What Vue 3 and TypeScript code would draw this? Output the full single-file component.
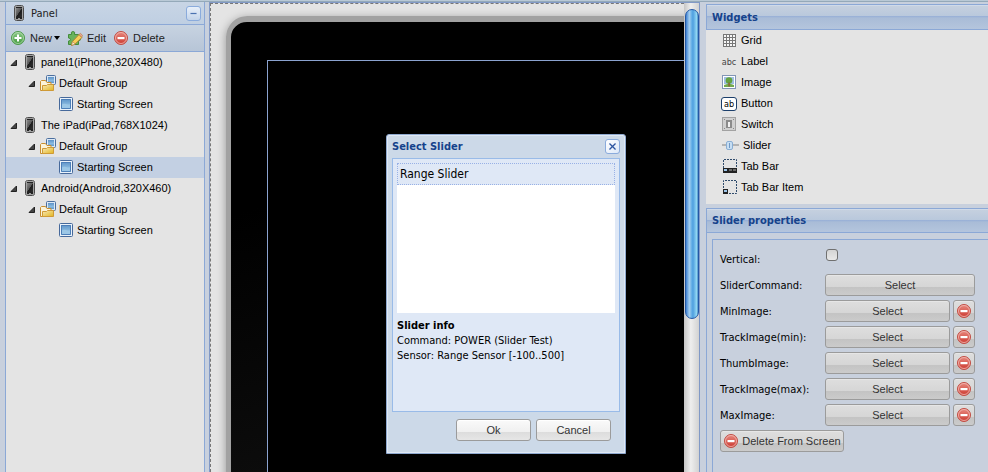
<script setup lang="ts">
import { ref } from 'vue'

interface TreeRow {
  id: number
  label: string
  icon: 'phone' | 'group' | 'screen'
  level: number
}

interface WidgetItem {
  label: string
  icon?: string
  glyph?: string
  wide?: boolean
}

const rows: TreeRow[] = [
  { id: 1, label: 'panel1(iPhone,320X480)', icon: 'phone', level: 0 },
  { id: 2, label: 'Default Group', icon: 'group', level: 1 },
  { id: 3, label: 'Starting Screen', icon: 'screen', level: 2 },
  { id: 4, label: 'The iPad(iPad,768X1024)', icon: 'phone', level: 0 },
  { id: 5, label: 'Default Group', icon: 'group', level: 1 },
  { id: 6, label: 'Starting Screen', icon: 'screen', level: 2 },
  { id: 7, label: 'Android(Android,320X460)', icon: 'phone', level: 0 },
  { id: 8, label: 'Default Group', icon: 'group', level: 1 },
  { id: 9, label: 'Starting Screen', icon: 'screen', level: 2 },
]

const widgets: WidgetItem[] = [
  { label: 'Grid', icon: 'grid' },
  { label: 'Label', glyph: 'abc' },
  { label: 'Image', icon: 'image' },
  { label: 'Button', glyph: 'ab' },
  { label: 'Switch', icon: 'switch' },
  { label: 'Slider', icon: 'slider', wide: true },
  { label: 'Tab Bar', icon: 'tabbar' },
  { label: 'Tab Bar Item', icon: 'tabitem' },
]

const images = ['MinImage', 'TrackImage(min)', 'ThumbImage', 'TrackImage(max)', 'MaxImage']

const selected = ref(6)
const vertical = ref(false)
const dialogOpen = ref(true)
</script>

<template>
  <div class="page">
    <svg class="sprite" aria-hidden="true">
      <defs>
        <linearGradient id="gGreen" x1="0" y1="0" x2="0" y2="1">
          <stop offset="0" stop-color="#8fc98a" /><stop offset="1" stop-color="#3f9a3c" />
        </linearGradient>
        <linearGradient id="gRed" x1="0" y1="0" x2="0" y2="1">
          <stop offset="0" stop-color="#e88a80" /><stop offset="1" stop-color="#cb392f" />
        </linearGradient>
        <linearGradient id="gBlue" x1="0" y1="0" x2="0" y2="1">
          <stop offset="0" stop-color="#5d93c8" /><stop offset="0.6" stop-color="#8bbbe0" /><stop offset="1" stop-color="#5c95c9" />
        </linearGradient>
        <linearGradient id="gFolder" x1="0" y1="0" x2="1" y2="1">
          <stop offset="0" stop-color="#f8e9b8" /><stop offset="1" stop-color="#e2b51f" />
        </linearGradient>
        <linearGradient id="gPhone" x1="0" y1="0" x2="1" y2="1">
          <stop offset="0" stop-color="#888" /><stop offset="0.5" stop-color="#555" /><stop offset="0.52" stop-color="#1c1c1c" /><stop offset="1" stop-color="#2e2e2e" />
        </linearGradient>
      </defs>
      <symbol id="i-phone" viewBox="0 0 16 16">
        <rect x="3.5" y="0.5" width="9" height="15" rx="2" fill="#ddd" stroke="#4b4b4b" />
        <rect x="4.5" y="1.5" width="7" height="13" rx="1" fill="#222" stroke="#bbb" stroke-width="0.6" />
        <rect x="5" y="3" width="6" height="9" fill="url(#gPhone)" />
        <rect x="7" y="13" width="2" height="1" fill="#999" />
      </symbol>
      <symbol id="i-group" viewBox="0 0 16 16">
        <rect x="6.5" y="0.5" width="9" height="9" rx="1" fill="#dce8f5" stroke="#4c6f9e" />
        <rect x="8" y="2" width="6" height="6" fill="url(#gBlue)" />
        <path d="M0.5 15.5v-9l1-1h4l1.500 2h4v8z" fill="#fbf3da" stroke="#c98f2e" />
        <path d="M2.500 15.500v-5h4l1-1h6v6z" fill="url(#gFolder)" stroke="#cf9a36" />
      </symbol>
      <symbol id="i-screen" viewBox="0 0 16 16">
        <rect x="1.500" y="1.500" width="13" height="13" rx="1" fill="#eaf2fa" stroke="#46699b" />
        <rect x="3" y="3" width="10" height="10" fill="url(#gBlue)" />
        <path d="M3 9q3-2 5-1t5 0v5H3z" fill="#9cc7e6" />
        <path d="M3.500 12.500v-9h9v9z" fill="none" stroke="#4d7fb8" />
      </symbol>
      <symbol id="i-add" viewBox="0 0 16 16">
        <circle cx="8" cy="8" r="6.500" fill="url(#gGreen)" stroke="#4d9a4b" />
        <circle cx="8" cy="8" r="5.500" fill="none" stroke="#bfe0bb" stroke-width="0.7" />
        <path d="M7 4.500h2V7h2.500v2H9v2.500H7V9H4.500V7H7z" fill="#fff" />
      </symbol>
      <symbol id="i-del" viewBox="0 0 16 16">
        <circle cx="8" cy="8" r="6.500" fill="url(#gRed)" stroke="#c14e45" />
        <circle cx="8" cy="8" r="5.500" fill="none" stroke="#f3bcb6" stroke-width="0.8" />
        <rect x="4.500" y="7" width="7" height="2.200" fill="#fff" />
      </symbol>
      <symbol id="i-edit" viewBox="0 0 16 16">
        <path d="M1.500 4.500h3q-1-3 1.500-3t1.500 3h4v3q2-.5 2 1.500t-2 1.500v4h-10v-3.500q2 0 2-1.500t-2-1.500z" fill="#69b35c" stroke="#438c3b" />
        <path d="M4.500 15.500l1-4 6.500-7 3 3-7 6.500z" fill="#f5cf59" stroke="#b5853a" />
        <path d="M12 4.500l1.500-1.200 2 2.200-.8 1.800z" fill="#e8a199" stroke="#b5853a" stroke-width=".6" />
        <path d="M4.500 15.500l1-4 2.800 2.600z" fill="#fae6c8" stroke="#a97c3d" stroke-width=".6" />
      </symbol>
      <symbol id="i-grid" viewBox="0 0 16 16">
        <rect x="2" y="2" width="13" height="13" fill="#f6f6f6" />
        <path d="M2.500 2v13M5.500 2v13M8.500 2v13M11.500 2v13M14.500 2v13M2 2.500h13M2 5.500h13M2 8.500h13M2 11.500h13M2 14.500h13" stroke="#777" />
      </symbol>
      <symbol id="i-image" viewBox="0 0 16 16">
        <rect x="1.500" y="1.500" width="13" height="13" fill="#fff" stroke="#8295b5" />
        <rect x="3" y="3" width="10" height="7" fill="#9fc0e2" />
        <path d="M3 11l3-1h4l3 1v2H3z" fill="#74a94e" />
        <circle cx="8" cy="6.500" r="3.300" fill="#64a23f" />
        <rect x="7.300" y="8.500" width="1.500" height="4" fill="#8a6337" />
      </symbol>
      <symbol id="i-switch" viewBox="0 0 16 16">
        <rect x="1.500" y="1.500" width="13" height="13" fill="#d0d0d0" stroke="#a2a2a2" />
        <rect x="5.500" y="4.500" width="5" height="7" fill="#8b8b8b" stroke="#8b8b8b" />
        <rect x="7" y="6" width="2" height="5" fill="#f2f2f2" />
        <path d="M3 3h1v1H3zM12 3h1v1h-1zM3 12h1v1H3zM12 12h1v1h-1z" fill="#888" />
      </symbol>
      <symbol id="i-slider" viewBox="0 0 18 16">
        <rect x="1" y="7" width="17" height="2" fill="#b3b3b3" />
        <rect x="5.500" y="4.500" width="6" height="8" rx="1.500" fill="#c7def3" stroke="#8aaed3" />
        <path d="M8.500 6v5" stroke="#6f99c7" />
      </symbol>
      <symbol id="i-tabbar" viewBox="0 0 16 16">
        <path d="M2.500 10V1.500h13V10" fill="none" stroke="#2f4b6c" stroke-dasharray="2 1" />
        <rect x="2" y="10" width="14" height="5" fill="#222" />
        <rect x="3" y="11" width="3" height="2" fill="#9cc5ea" />
        <path d="M8 11h3v2H8zM12 11h3v2h-3z" fill="#6a6a6a" />
      </symbol>
      <symbol id="i-tabitem" viewBox="0 0 16 16">
        <path d="M2.500 9V1.500h13v13H8" fill="none" stroke="#2f4b6c" stroke-dasharray="2 1" />
        <rect x="2" y="10" width="5" height="5" fill="#222" />
        <rect x="3" y="11" width="3" height="2" fill="#9cc5ea" />
      </symbol>
    </svg>

    <aside class="panel">
      <header class="panel-head">
        <svg class="icon"><use href="#i-phone" /></svg>
        <span class="grow">Panel</span>
        <button class="tool" type="button" aria-label="Collapse">
          <svg viewBox="0 0 15 15"><path d="M4 7.500h7" stroke="#4a72b0" stroke-width="1.400" /></svg>
        </button>
      </header>
      <div class="toolbar">
        <button type="button" class="new"><svg class="icon"><use href="#i-add" /></svg>New<i class="caret"></i></button>
        <button type="button"><svg class="icon"><use href="#i-edit" /></svg>Edit</button>
        <button type="button"><svg class="icon"><use href="#i-del" /></svg>Delete</button>
      </div>
      <ul class="tree">
        <li v-for="row in rows" :key="row.id">
          <button type="button" class="row" :class="['level' + row.level, { on: row.id === selected }]" @click="selected = row.id">
            <svg v-if="row.level < 2" class="arrow" viewBox="0 0 8 8"><path d="M6.500 1v5.500H1z" fill="#444" stroke="#222" /></svg>
            <svg class="icon"><use :href="'#i-' + row.icon" /></svg>
            {{ row.label }}
          </button>
        </li>
      </ul>
    </aside>

    <main class="center">
      <div class="canvas">
        <div class="device"><div class="screen"></div></div>
      </div>
      <div class="scroll"><div class="thumb"></div></div>
    </main>

    <aside class="side">
      <section class="widgets">
        <h2 class="bar">Widgets</h2>
        <ul>
          <li v-for="w in widgets" :key="w.label">
            <span v-if="w.glyph" class="glyph" :class="{ boxed: w.glyph === 'ab' }">{{ w.glyph }}</span>
            <svg v-else class="icon" :class="{ wide: w.wide }"><use :href="'#i-' + w.icon" /></svg>
            {{ w.label }}
          </li>
        </ul>
      </section>
      <section class="props">
        <h2 class="bar">Slider properties</h2>
        <form class="form" @submit.prevent>
          <div class="field">
            <label for="vertical">Vertical:</label>
            <input id="vertical" v-model="vertical" type="checkbox" />
          </div>
          <div class="field">
            <label for="command">SliderCommand:</label>
            <button id="command" type="button" class="btn grow">Select</button>
          </div>
          <div v-for="(name, i) in images" :key="name" class="field">
            <label :for="'image' + i">{{ name }}:</label>
            <button :id="'image' + i" type="button" class="btn grow">Select</button>
            <button type="button" class="btn clear" :aria-label="'Clear ' + name"><svg class="icon"><use href="#i-del" /></svg></button>
          </div>
          <button type="button" class="btn remove"><svg class="icon"><use href="#i-del" /></svg>Delete From Screen</button>
        </form>
      </section>
    </aside>

    <div v-if="dialogOpen" class="dialog" role="dialog" aria-labelledby="dialog-title">
      <header class="dialog-head">
        <h2 id="dialog-title">Select Slider</h2>
        <button class="tool" type="button" aria-label="Close" @click="dialogOpen = false">
          <svg viewBox="0 0 15 15"><path d="M4 4l7 7M11 4l-7 7" stroke="#2d55a0" stroke-width="1.500" /></svg>
        </button>
      </header>
      <div class="dialog-body">
        <div class="list" role="listbox" aria-label="Sliders">
          <div class="option" role="option" aria-selected="true">Range Slider</div>
        </div>
        <div class="info">
          <strong>Slider info</strong>
          <span>Command: POWER (Slider Test)</span>
          <span>Sensor: Range Sensor [-100..500]</span>
        </div>
      </div>
      <footer class="dialog-foot">
        <button type="button" class="btn light" @click="dialogOpen = false">Ok</button>
        <button type="button" class="btn light" @click="dialogOpen = false">Cancel</button>
      </footer>
    </div>
  </div>
</template>

<style>
body {
  background: #c8d0dd;
}
</style>

<style scoped>
* {
  box-sizing: border-box;
}
.page {
  display: grid;
  grid-template-columns: 200px minmax(0, 1fr) 282px;
  min-height: 100vh;
  padding: 1px 0 0 5px;
  border-top: 1px solid #b9c9d6;
  background: #c8d0dd;
  box-shadow: inset 0 1px #94a9b9;
  position: relative;
  overflow: hidden;
  font: 11px/21px "Liberation Sans", Arial, sans-serif;
  color: #000;
}
.sprite {
  position: absolute;
  width: 0;
  height: 0;
}
button {
  font: inherit;
  color: inherit;
  padding: 0;
  border: 0;
  background: none;
}
ul {
  list-style: none;
  margin: 0;
  padding: 0;
}
.icon {
  width: 16px;
  height: 16px;
  flex: none;
}
.grow {
  flex: 1;
}
.panel {
  border: 1px solid #8ba8d6;
  border-width: 0 1px;
  background: #e4e4e4;
}
.panel-head {
  display: flex;
  align-items: center;
  height: 23px;
  padding: 0 3px 0 5px;
  gap: 4px;
  color: #222;
  border-bottom: 1px solid #8ba8d6;
  background: linear-gradient(#c8d5e5, #bfcfe2);
  font-family: "DejaVu Sans Condensed", Tahoma, sans-serif;
}
.tool {
  width: 15px;
  height: 15px;
  border: 1px solid #8aabdc;
  border-radius: 3px;
  background: linear-gradient(#e8f0fa, #c3d4ea);
  display: flex;
}
.tool svg {
  width: 100%;
  height: 100%;
  fill: none;
}
.toolbar {
  display: flex;
  align-items: center;
  height: 27px;
  padding-left: 4px;
  gap: 7px;
  color: #222;
  border-bottom: 1px solid #8ba8d6;
  background: linear-gradient(#c7d3e1, #b7c5d7);
}
.toolbar button {
  display: flex;
  align-items: center;
  gap: 4px;
}
.caret {
  border: 3px solid transparent;
  border-top: 4px solid #000;
  border-bottom: 0;
  margin-left: -2px;
}
.row {
  display: flex;
  align-items: center;
  width: 100%;
  height: 21px;
  gap: 3px;
  text-align: left;
  white-space: nowrap;
}
.row .icon,
.widgets .icon {
  margin-bottom: 1px;
}
.row.on {
  background: #c3d0e3;
}
.arrow {
  width: 8px;
  height: 8px;
  margin-right: 1px;
}
.level0 {
  padding-left: 4px;
}
.level1 {
  padding-left: 22px;
}
.level2 {
  padding-left: 52px;
}
.center {
  display: flex;
  min-width: 0;
  margin: 0 6px 0 4px;
  border: 1px solid #8199c6;
  border-bottom: 0;
  background: #e4e4e4;
}
.canvas {
  flex: 1;
  min-width: 0;
  overflow: hidden;
  border: 1px dashed #777;
  border-width: 1px 0 0 1px;
  display: flex;
  padding: 12px 0 0 15px;
}
.device {
  flex: 1;
  margin-right: -60px;
  margin-bottom: -60px;
  border: 5px solid #a2a2a2;
  border-top-width: 6px;
  border-radius: 21px;
  background: linear-gradient(165deg, #000 30%, #141414);
  box-shadow: 0 2px 10px rgba(0, 0, 0, 0.35);
  padding: 38px 0 0 36px;
  display: flex;
}
.screen {
  flex: 1;
  border: 1px solid #8ba3d0;
  background: #000;
}
.scroll {
  width: 15px;
  padding: 6px 0 0 1px;
  background: linear-gradient(90deg, #c6c6c6, #eee 45%, #d2d2d2);
}
.thumb {
  height: 310px;
  border: 1px solid #2458a5;
  border-radius: 7px;
  background: linear-gradient(90deg, #3d7fd0 0, #a5cff0 28%, #62aee6 48%, #4f9fdf 58%, #90d6f3 88%, #4a8dc5 100%);
}
.side {
  display: flex;
  flex-direction: column;
  gap: 4px;
  padding-top: 2px;
}
.bar {
  margin: 0;
  height: 26px;
  padding-left: 5px;
  border: 1px solid #8ba8d6;
  border-right: 0;
  background: linear-gradient(#dae4f1 0, #c5d0df 1px, #b9c8dc 11px, #96aed7 11px, #a9bcd7 13px, #b4c5dd);
  color: #15428b;
  font: bold 11px/26px "DejaVu Sans Condensed", Tahoma, sans-serif;
}
.widgets {
  background: #e4e4e4;
}
.widgets ul {
  padding: 0 0 6px 15px;
}
.widgets li {
  display: flex;
  align-items: center;
  gap: 4px;
  height: 21px;
}
.icon.wide {
  width: 18px;
}
.glyph {
  width: 16px;
  height: 14px;
  flex: none;
  display: flex;
  justify-content: center;
  color: #444;
  font: 9px/14px "DejaVu Sans Condensed", sans-serif;
}
.boxed {
  border: 1px solid #1c3f6b;
  border-radius: 3px;
  background: #fff;
  color: #000;
  line-height: 12px;
}
.props {
  flex: 1;
  display: flex;
  flex-direction: column;
  border-left: 1px solid #8ba8d6;
}
.props .bar {
  height: 25px;
  border-left: 0;
  line-height: 24px;
}
.form {
  flex: 1;
  margin: 6px 0 0 5px;
  padding: 6px 13px 0 7px;
  border: 1px solid #8ba8d6;
  border-width: 1px 0 0 1px;
  font-family: "DejaVu Sans Condensed", Tahoma, sans-serif;
}
.field {
  display: flex;
  align-items: center;
  height: 26px;
  gap: 3px;
}
.field label {
  width: 102px;
}
.field input {
  appearance: none;
  width: 12px;
  height: 12px;
  margin: 0 0 8px 1px;
  border: 1px solid #707070;
  border-radius: 3px;
  background: linear-gradient(#d4d4d4, #e8e8e8);
}
.field input:checked {
  background: #5a86c5;
}
.btn {
  display: flex;
  align-items: center;
  justify-content: center;
  height: 22px;
  border: 1px solid #9b9b9b;
  border-radius: 3px;
  background: linear-gradient(#dedede, #d6d6d6 58%, #c3c3c3 59%, #cbcbcb);
  box-shadow: inset 0 1px #e6e6e6;
  color: #333;
  font: 11px/20px "Liberation Sans", Arial, sans-serif;
}
.clear {
  width: 22px;
}
.remove {
  gap: 3px;
  width: 124px;
  margin-top: 2px;
}
.dialog {
  position: absolute;
  left: 386px;
  top: 133px;
  width: 240px;
  height: 320px;
  display: flex;
  flex-direction: column;
  padding: 0 5px;
  border: 1px solid #8fa9cf;
  border-radius: 3px 3px 0 0;
  background: #ccd9e8;
  box-shadow: inset 0 0 0 1px #e0e9f4;
  font: 11px/15px "DejaVu Sans Condensed", Tahoma, sans-serif;
}
.dialog-head {
  display: flex;
  align-items: center;
  justify-content: space-between;
  height: 23px;
}
.dialog-head h2 {
  margin: 0;
  font-size: 11px;
  color: #15428b;
}
.dialog .tool {
  background: linear-gradient(135deg, #fff, #dce8f8);
}
.dialog-body {
  flex: 1;
  padding: 4px;
  border: 1px solid #99bbe8;
  background: #dfe8f6;
}
.list {
  height: 150px;
  background: #fff;
}
.option {
  padding-left: 2px;
  border: 1px dotted #98b1e6;
  background: #dfe8f6;
  font-size: 12px;
  line-height: 20px;
}
.info {
  display: flex;
  flex-direction: column;
  padding-top: 5px;
  white-space: nowrap;
}
.dialog-foot {
  display: flex;
  justify-content: flex-end;
  gap: 5px;
  padding: 7px 9px 12px 0;
}
.light {
  width: 75px;
  background: linear-gradient(#fafafa, #f0f0f0 58%, #dcdcdc 59%, #e6e6e6);
  box-shadow: inset 0 1px #fff;
}
</style>
